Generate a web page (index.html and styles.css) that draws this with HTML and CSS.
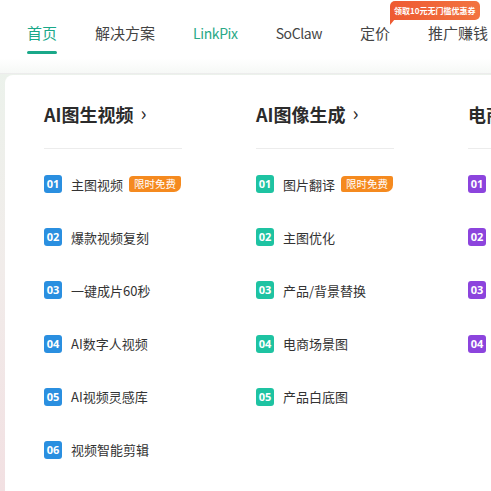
FILE: index.html
```html
<!DOCTYPE html>
<html lang="zh-CN">
<head>
<meta charset="utf-8">
<link rel="stylesheet" href="styles.css">
</head>
<body>
<header class="header">
  <nav class="nav">
    <a class="nav-item active">首页</a>
    <a class="nav-item">解决方案</a>
    <a class="nav-item green latin">LinkPix</a>
    <a class="nav-item latin">SoClaw</a>
    <a class="nav-item has-badge">定价<span class="promo">领取10元无门槛优惠券</span></a>
    <a class="nav-item">推广赚钱</a>
  </nav>
</header>
<main class="panel">
  <section class="col">
    <h2 class="col-title">AI图生视频<span class="chev">›</span></h2>
    <div class="divider"></div>
    <ul class="list blue">
      <li class="item"><span class="num">01</span><span class="label">主图视频</span><span class="tag">限时免费</span></li>
      <li class="item"><span class="num">02</span><span class="label">爆款视频复刻</span></li>
      <li class="item"><span class="num">03</span><span class="label">一键成片60秒</span></li>
      <li class="item"><span class="num">04</span><span class="label">AI数字人视频</span></li>
      <li class="item"><span class="num">05</span><span class="label">AI视频灵感库</span></li>
      <li class="item"><span class="num">06</span><span class="label">视频智能剪辑</span></li>
    </ul>
  </section>
  <section class="col">
    <h2 class="col-title">AI图像生成<span class="chev">›</span></h2>
    <div class="divider"></div>
    <ul class="list green">
      <li class="item"><span class="num">01</span><span class="label">图片翻译</span><span class="tag">限时免费</span></li>
      <li class="item"><span class="num">02</span><span class="label">主图优化</span></li>
      <li class="item"><span class="num">03</span><span class="label">产品/背景替换</span></li>
      <li class="item"><span class="num">04</span><span class="label">电商场景图</span></li>
      <li class="item"><span class="num">05</span><span class="label">产品白底图</span></li>
    </ul>
  </section>
  <section class="col">
    <h2 class="col-title">电商视觉设计<span class="chev">›</span></h2>
    <div class="divider"></div>
    <ul class="list purple">
      <li class="item"><span class="num">01</span><span class="label">详情页设计</span></li>
      <li class="item"><span class="num">02</span><span class="label">海报设计</span></li>
      <li class="item"><span class="num">03</span><span class="label">店铺装修</span></li>
      <li class="item"><span class="num">04</span><span class="label">品牌设计</span></li>
    </ul>
  </section>
</main>
</body>
</html>
```
FILE: styles.css
```css
* { box-sizing: border-box; }
html, body {
  margin: 0;
  padding: 0;
  width: 491px;
  height: 491px;
  overflow: hidden;
}
body {
  font-family: "Noto Sans CJK SC", "Noto Sans", sans-serif;
  background: linear-gradient(180deg, #eaf4ec 0%, #f1ecea 55%, #f2e0e2 100%);
  color: #333;
}
.header {
  height: 74px;
  background: linear-gradient(180deg, #ffffff 0%, #ffffff 80%, #f6f8f6 100%);
  border-bottom: 1px solid #ececec;
  overflow: visible;
  white-space: nowrap;
}
.nav {
  display: flex;
  gap: 38px;
  padding-left: 27px;
  padding-top: 22px;
}
.nav-item {
  position: relative;
  font-size: 15px;
  line-height: 22px;
  color: #444;
  flex: none;
}
.nav-item.latin {
  font-size: 14px;
  letter-spacing: -0.4px;
}
.nav-item.active {
  color: #1aa889;
}
.nav-item.active::after {
  content: "";
  position: absolute;
  left: 0;
  right: 0;
  top: 29px;
  height: 3px;
  border-radius: 2px;
  background: #1aa889;
}
.nav-item.green { color: #2aa987; }
.promo {
  position: absolute;
  left: 30px;
  top: -21px;
  height: 19px;
  padding: 0 4px;
  border-radius: 5px 5px 5px 0;
  background: linear-gradient(90deg, #ee5a32, #f27440);
  color: #fff;
  font-size: 8px;
  line-height: 19px;
  font-weight: 700;
  white-space: nowrap;
}
.promo::after {
  content: "";
  position: absolute;
  left: 0;
  top: 18px;
  border-left: 5px solid #ee5a32;
  border-bottom: 6px solid transparent;
}
.panel {
  margin-left: 5px;
  margin-top: 1px;
  height: 420px;
  background: #fff;
  border-radius: 8px 0 0 0;
  display: flex;
  gap: 74px;
  padding-left: 39px;
  padding-top: 27px;
  white-space: nowrap;
}
.col {
  width: 138px;
  flex: none;
}
.col-title {
  margin: 0;
  font-size: 18px;
  line-height: 24px;
  font-weight: 700;
  color: #2b2b2b;
}
.chev {
  display: inline-block;
  margin-left: 7px;
  font-weight: 400;
  font-size: 20px;
  position: relative;
  top: -1px;
}
.divider {
  margin-top: 22px;
  height: 1px;
  background: #ececec;
}
.list {
  list-style: none;
  margin: 26px 0 0;
  padding: 0;
  display: flex;
  flex-direction: column;
  gap: 35.2px;
}
.item {
  display: flex;
  align-items: center;
  height: 18px;
}
.num {
  width: 18px;
  height: 18px;
  border-radius: 3px;
  color: #fff;
  font-size: 11px;
  font-weight: 700;
  line-height: 18px;
  text-align: center;
  flex: none;
  font-family: "Open Sans", "Noto Sans", sans-serif;
}
.blue .num { background: #2a8fe0; }
.green .num { background: #1ec3a2; }
.purple .num { background: #8c44dd; }
.label {
  margin-left: 9px;
  font-size: 13px;
  color: #333;
}
.tag {
  margin-left: 6px;
  height: 16px;
  padding: 0 5px;
  background: #f58a1f;
  color: #fff;
  font-size: 10.5px;
  line-height: 16px;
  border-radius: 4px 2px 7px 2px;
}
```
